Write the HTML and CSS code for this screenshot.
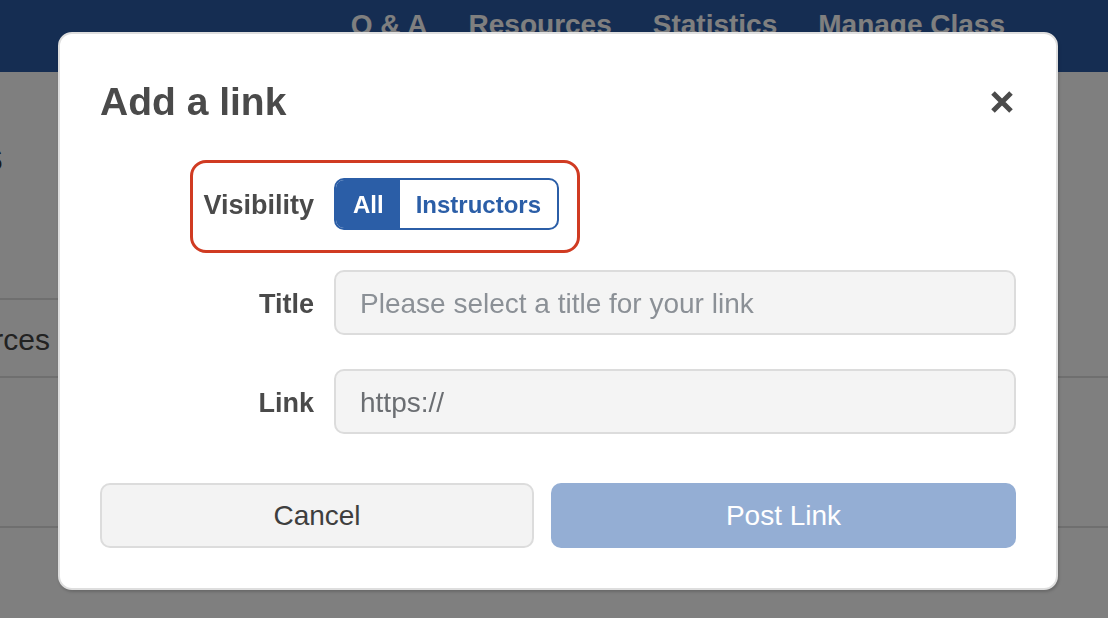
FILE: index.html
```html
<!DOCTYPE html>
<html lang="en">
<head>
<meta charset="utf-8">
<title>Add a link</title>
<link rel="stylesheet" href="styles.css">
</head>
<body>
<div class="page">
  <header class="topbar">
    <nav class="nav">
      <a class="nav-item">Q &amp; A</a>
      <a class="nav-item">Resources</a>
      <a class="nav-item">Statistics</a>
      <a class="nav-item">Manage Class</a>
    </nav>
  </header>
  <main class="content">
    <div class="course-title">Resources</div>
    <div class="tabs">
      <div class="tab">Resources</div>
    </div>
    <div class="section"></div>
  </main>
</div>

<div class="overlay"></div>

<div class="modal" role="dialog">
  <div class="modal-header">
    <h2 class="modal-title">Add a link</h2>
    <button class="close" aria-label="Close">
      <svg width="24" height="24" viewBox="0 0 24 24"><path d="M3 3 L21 21 M21 3 L3 21" stroke="#4a4a4a" stroke-width="5" fill="none"/></svg>
    </button>
  </div>

  <div class="row row-visibility">
    <span class="highlight"></span>
    <label class="label">Visibility</label>
    <div class="toggle">
      <span class="seg seg-active">All</span>
      <span class="seg">Instructors</span>
    </div>
  </div>

  <div class="row row-title">
    <label class="label">Title</label>
    <div class="input placeholder">Please select a title for your link</div>
  </div>

  <div class="row row-link">
    <label class="label">Link</label>
    <div class="input value">https://</div>
  </div>

  <div class="actions">
    <button class="btn btn-cancel">Cancel</button>
    <button class="btn btn-post">Post Link</button>
  </div>
</div>
</body>
</html>
```

FILE: styles.css
```css
* { box-sizing: border-box; }
html, body {
  margin: 0;
  padding: 0;
  width: 1108px;
  height: 618px;
  overflow: hidden;
  font-family: "Liberation Sans", Arial, sans-serif;
  background: #ffffff;
}

.page { width: 1108px; height: 618px; }

.topbar {
  height: 72px;
  background: #2a5ba5;
  display: flex;
  justify-content: flex-end;
  padding-right: 103px;
}
.nav { display: flex; gap: 41px; padding-top: 7px; }
.nav-item {
  color: #ffffff;
  font-weight: bold;
  font-size: 28px;
  line-height: 36px;
}

.content { position: relative; }
.course-title {
  width: 300px;
  margin-left: -297px;
  text-align: right;
  font-size: 42px;
  font-weight: bold;
  color: #333;
  margin-top: 62px;
  line-height: 46px;
}
.tabs {
  margin-top: 120px;
  width: 1108px;
  height: 78px;
  border-bottom: 2px solid #dedede;
  display: flex;
  align-items: center;
  position: relative;
}
.tabs::before {
  content: "";
  position: absolute;
  left: 0; top: -2px;
  width: 320px;
  border-top: 2px solid #dedede;
}
.tab {
  width: 300px;
  margin-left: -250px;
  text-align: right;
  font-size: 30px;
  color: #444;
  padding-top: 4px;
}
.section {
  height: 150px;
  border-bottom: 2px solid #dedede;
}

.overlay {
  position: fixed;
  inset: 0;
  background: rgba(0, 0, 0, 0.5);
}

.modal {
  position: absolute;
  left: 58px;
  top: 32px;
  width: 1000px;
  height: 558px;
  background: #fff;
  border: 2px solid #dedede;
  border-radius: 14px;
  box-shadow: 1px 2px 3px rgba(0, 0, 0, 0.18);
  padding: 48px 40px 40px 40px;
  display: flex;
  flex-direction: column;
  color: #4a4a4a;
}

.modal-header {
  height: 40px;
  display: flex;
  align-items: center;
  justify-content: space-between;
}
.modal-title {
  margin: 0;
  font-size: 39px;
  line-height: 40px;
  font-weight: bold;
  color: #4a4a4a;
}
.close {
  border: none;
  background: none;
  padding: 0;
  margin-right: 2px;
  width: 24px;
  height: 24px;
  display: flex;
}

.row {
  display: grid;
  grid-template-columns: 214px 1fr;
  column-gap: 20px;
  align-items: center;
  position: relative;
}
.label {
  text-align: right;
  font-weight: bold;
  font-size: 27px;
  color: #4a4a4a;
  padding-top: 3px;
}
.row-visibility { margin-top: 56px; height: 52px; }
.row-title { margin-top: 40px; height: 65px; }
.row-link { margin-top: 34px; height: 65px; }

.highlight {
  position: absolute;
  left: 90px;
  top: -18px;
  width: 390px;
  height: 93px;
  border: 3px solid #d03b22;
  border-radius: 16px;
}

.toggle {
  display: flex;
  justify-self: start;
  height: 52px;
  border: 2px solid #2b5ea7;
  border-radius: 10px;
  overflow: hidden;
}
.seg {
  display: flex;
  align-items: center;
  font-weight: bold;
  font-size: 24px;
  color: #2b5ea7;
  padding: 2px 16px 0 16px;
}
.seg-active {
  background: #2b5ea7;
  color: #fff;
  padding: 2px 16px 0 17px;
}

.input {
  height: 65px;
  background: #f4f4f4;
  border: 2px solid #dcdcdc;
  border-radius: 10px;
  padding: 3px 0 0 24px;
  display: flex;
  align-items: center;
  font-size: 28px;
}
.placeholder { color: #8b9096; }
.value { color: #6b6e72; }

.actions {
  margin-top: 49px;
  display: grid;
  grid-template-columns: 434px 1fr;
  column-gap: 17px;
  height: 65px;
}
.btn {
  font-family: "Liberation Sans", Arial, sans-serif;
  font-size: 28px;
  border-radius: 10px;
  height: 65px;
  padding-top: 2px;
}
.btn-cancel {
  background: #f3f3f3;
  border: 2px solid #dcdcdc;
  color: #3e3e3e;
}
.btn-post {
  background: #94aed4;
  border: none;
  color: #fff;
}
```
